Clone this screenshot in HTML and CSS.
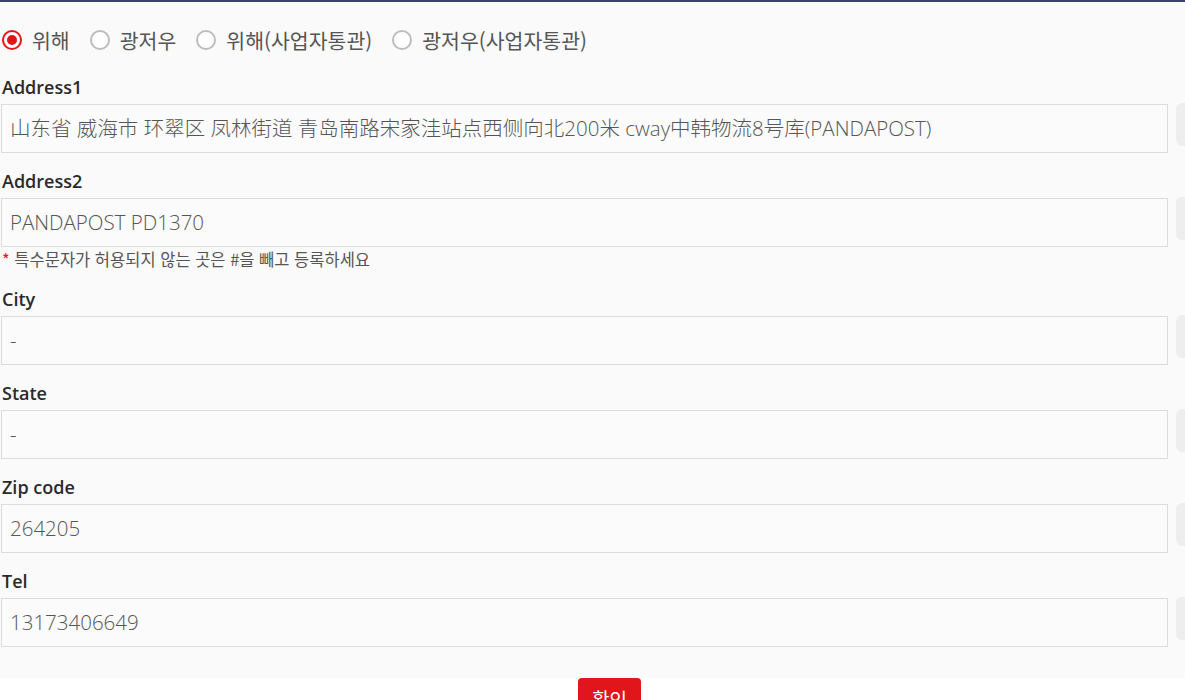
FILE: index.html
```html
<!DOCTYPE html>
<html lang="ko">
<head>
    <meta charset="UTF-8">
    <title>주소</title>
    <link rel="stylesheet" href="styles.css">
</head>
<body>
    <div class="topline"></div>

    <div class="form">
        <!-- 창고 선택 -->
        <div class="radios">
            <label class="radio"><span class="dot on"></span>위해</label>
            <label class="radio"><span class="dot"></span>광저우</label>
            <label class="radio"><span class="dot"></span>위해(사업자통관)</label>
            <label class="radio"><span class="dot"></span>광저우(사업자통관)</label>
        </div>

        <div class="group">
            <div class="label">Address1</div>
            <div class="row">
                <div class="field">山东省 威海市 环翠区 凤林街道 青岛南路宋家洼站点西侧向北200米 cway中韩物流8号库(PANDAPOST)</div>
                <div class="copy"></div>
            </div>
        </div>

        <div class="group">
            <div class="label">Address2</div>
            <div class="row">
                <div class="field">PANDAPOST PD1370</div>
                <div class="copy"></div>
            </div>
            <p class="note"><span class="star">*</span> 특수문자가 허용되지 않는 곳은 #을 빼고 등록하세요</p>
        </div>

        <div class="group">
            <div class="label">City</div>
            <div class="row">
                <div class="field">-</div>
                <div class="copy"></div>
            </div>
        </div>

        <div class="group">
            <div class="label">State</div>
            <div class="row">
                <div class="field">-</div>
                <div class="copy"></div>
            </div>
        </div>

        <div class="group">
            <div class="label">Zip code</div>
            <div class="row">
                <div class="field">264205</div>
                <div class="copy"></div>
            </div>
        </div>

        <div class="group">
            <div class="label">Tel</div>
            <div class="row">
                <div class="field">13173406649</div>
                <div class="copy"></div>
            </div>
        </div>
    </div>

    <div class="foot">
        <button class="ok">확인</button>
    </div>
</body>
</html>
```

FILE: styles.css
```css
body {
    margin: 0;
    background: #ffffff;
    font-family: "Open Sans", "Noto Sans CJK KR", sans-serif;
    overflow: hidden;
}

.topline {
    height: 2px;
    background: #3b4068;
}

.form {
    background: #fafafa;
    padding: 25px 0 16px 1px;
    width: 1240px;
}

.radios {
    display: flex;
    align-items: center;
    height: 26px;
    margin-bottom: 21px;
}

.radio {
    display: flex;
    align-items: center;
    font-family: "Noto Sans CJK KR", sans-serif;
    font-size: 20.5px;
    color: #555;
    margin-right: 19px;
}

.dot {
    width: 16px;
    height: 16px;
    border: 2px solid #bdbdbd;
    border-radius: 50%;
    margin: 0 10px 0 1px;
    position: relative;
    background: #fff;
}

.dot.on {
    border-color: #e0161b;
}

.dot.on::after {
    content: "";
    position: absolute;
    top: 3px;
    left: 3px;
    width: 10px;
    height: 10px;
    border-radius: 50%;
    background: #e0161b;
}

.group {
    margin-bottom: 15px;
}

.label {
    font-size: 18px;
    font-weight: 600;
    color: #2a2a2a;
    line-height: 26px;
    margin: 0 0 4px 1px;
}

.row {
    display: flex;
    gap: 8px;
}

.field {
    width: 1167px;
    height: 49px;
    box-sizing: border-box;
    border: 1px solid #dcdcdc;
    background: #fbfbfb;
    font-size: 20.5px;
    font-weight: 300;
    color: #555;
    line-height: 47px;
    padding: 0 0 0 8px;
    white-space: nowrap;
}

.copy {
    width: 60px;
    height: 43px;
    background: #eeeeee;
    border-radius: 6px;
    margin-top: -1px;
}

.note {
    margin: 2px 0 0 1px;
    padding-bottom: 2px;
    font-family: "Noto Sans CJK KR", sans-serif;
    font-size: 16.5px;
    color: #555;
    line-height: 20px;
}

.star {
    color: #e0161b;
}

.foot {
    text-align: center;
    padding-left: 34px;
}

.ok {
    background: #e0161b;
    color: #fff;
    border: none;
    border-radius: 4px;
    font-family: "Noto Sans CJK KR", sans-serif;
    font-size: 19px;
    width: 63px;
    height: 40px;
    padding: 0;
}
```
